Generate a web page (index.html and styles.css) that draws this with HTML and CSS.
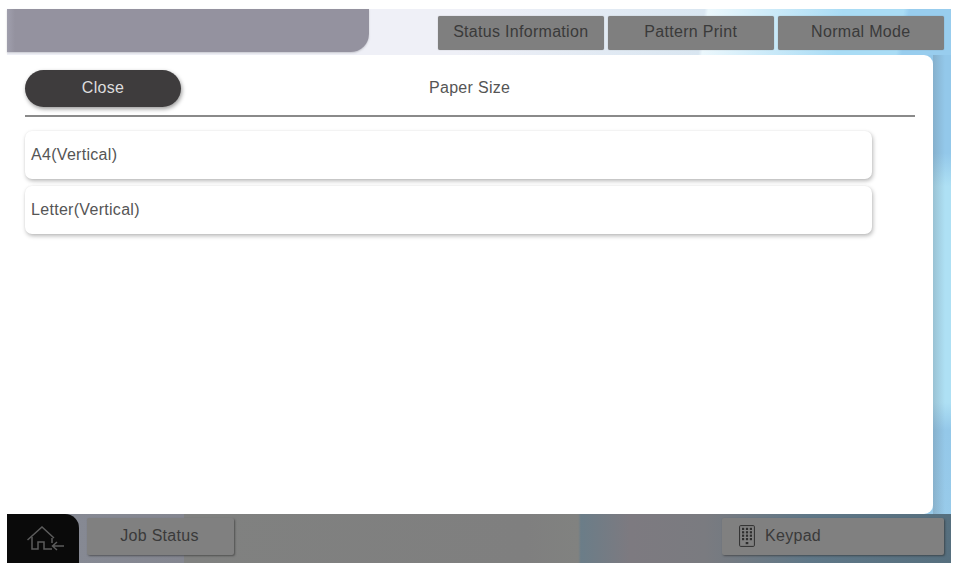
FILE: index.html
```html
<!DOCTYPE html>
<html lang="en">
<head>
<meta charset="utf-8">
<title>Paper Size</title>
<link rel="stylesheet" href="styles.css">
</head>
<body>
<div class="screen">
  <header class="top">
    <div class="tab-shape"></div>
    <nav class="top-buttons">
      <button class="top-btn">Status Information</button>
      <button class="top-btn">Pattern Print</button>
      <button class="top-btn">Normal Mode</button>
    </nav>
  </header>
  <main class="panel">
    <div class="panel-head">
      <button class="close">Close</button>
      <h1 class="title">Paper Size</h1>
    </div>
    <ul class="options">
      <li class="option">A4(Vertical)</li>
      <li class="option">Letter(Vertical)</li>
    </ul>
  </main>
  <footer class="bottom">
    <div class="home">
      <svg class="home-icon" width="38" height="25" viewBox="0 0 38 25" fill="none" stroke="#5c5c5c" stroke-width="1.5">
        <path d="M0.5 14 L15 1 L27 12"/>
        <path d="M5 11 V23 H11 V16 H17 V23 H25 M25 12 V17"/>
        <path d="M37 20 H25.5 M30 16 L25.5 20 L30 24"/>
      </svg>
    </div>
    <button class="foot-btn job">Job Status</button>
    <button class="foot-btn keypad">
      <svg width="16" height="22" viewBox="0 0 16 22">
        <rect x="0.6" y="0.6" width="14.8" height="20.8" rx="1" fill="none" stroke="#2e2e2e" stroke-width="1"/>
        <g class="keys">
          <rect x="3" y="2.8" width="2.2" height="2.2"/><rect x="6.9" y="2.8" width="2.2" height="2.2"/><rect x="10.8" y="2.8" width="2.2" height="2.2"/>
          <rect x="3" y="6.2" width="2.2" height="2.2"/><rect x="6.9" y="6.2" width="2.2" height="2.2"/><rect x="10.8" y="6.2" width="2.2" height="2.2"/>
          <rect x="3" y="9.6" width="2.2" height="2.2"/><rect x="6.9" y="9.6" width="2.2" height="2.2"/><rect x="10.8" y="9.6" width="2.2" height="2.2"/>
          <rect x="3" y="13" width="2.2" height="2.2"/><rect x="6.9" y="13" width="2.2" height="2.2"/><rect x="10.8" y="13" width="2.2" height="2.2"/>
          <rect x="6.7" y="17" width="2.6" height="2.2"/>
        </g>
      </svg>
      <span>Keypad</span>
    </button>
  </footer>
</div>
</body>
</html>
```
FILE: styles.css
```css
* { box-sizing: border-box; }
html, body { margin: 0; padding: 0; background: #fff; }
body { font-family: "Liberation Sans", Arial, sans-serif; font-size: 16px; letter-spacing: .3px; color: #555; height: 566px; overflow: hidden; }
button { font: inherit; letter-spacing: inherit; border: 0; padding: 0; margin: 0; }
.screen {
  width: 944px; height: 554px; margin: 9px 0 0 7px;
  display: flex; flex-direction: column;
  background:
    linear-gradient(90deg, transparent 926px, rgba(95,105,115,.25) 926px, transparent 938px),
    linear-gradient(180deg, #93c8ea 0%, #93c8ea 26%, #aee0f4 32%, #aee0f4 71%, #94c8e9 76%, #9accea 100%);
}
.top {
  height: 46px; display: flex; align-items: flex-start; justify-content: space-between;
  padding-right: 7px;
  background:
    linear-gradient(100deg, transparent 94.2%, #98cdee 94.8%),
    linear-gradient(98deg, #eff0f7 0%, #eff0f7 48%, #d9e6f1 73.4%, #ebf7fc 73.8%, #a9dcf5 88%, #a9dcf5 100%);
}
.tab-shape {
  width: 362px; height: 43px; background: linear-gradient(90deg, #a09fad 0, #94929f 8px);
  border-bottom-right-radius: 18px;
  box-shadow: 0 1px 2px rgba(120,120,130,.35);
}
.top-buttons { display: flex; gap: 3.5px; padding-top: 7px; }
.top-btn {
  width: 166.5px; height: 34px; background: #7f7f7f; color: #3a3a3a;
  border-radius: 2px; box-shadow: 0 0 1px rgba(60,60,60,.5);
  padding-bottom: 2px;
}
.panel {
  width: 926px; height: 459px; background: #fff;
  border-radius: 0 9px 9px 0;
  padding: 15px 18px 0;
}
.panel-head { height: 47px; display: flex; border-bottom: 2px solid #8a8a8a; }
.close {
  width: 156px; height: 37px; border-radius: 19px; background: #3e3c3d; color: #ddd;
  box-shadow: 1px 2px 4px rgba(0,0,0,.4); padding-bottom: 2px;
}
.title { flex: none; margin: 0 0 0 248px; font: inherit; letter-spacing: inherit; line-height: 35px; }
.options { list-style: none; margin: 0; padding: 14px 42px 0 0; display: flex; flex-direction: column; gap: 7px; width: 889px; }
.option {
  height: 48px; line-height: 47px; padding-left: 6px; background: #fff; border-radius: 7px;
  box-shadow: 1px 2px 4px rgba(0,0,0,.28), 0 0 2px rgba(0,0,0,.05);
}
.bottom {
  flex: 1; display: flex; align-items: flex-start; padding-right: 7px;
  background:
    linear-gradient(90deg, #878b95 0%, #848690 18.7%, #808180 18.8%, #7f7f7f 55%, #818280 60.5%, #6b7d88 60.8%, #7d7a80 66%, #7a7b80 74%, #5f7787 85%, #566f7e 100%);
}
.home {
  width: 72px; height: 49px; background: #0a0a0a; border-top-right-radius: 14px;
  display: flex; align-items: flex-start; padding: 12px 0 0 20px;
}
.foot-btn {
  height: 37px; margin-top: 4px; background: #808080; color: #3a3a3a; border-radius: 2px;
  box-shadow: 1px 1px 2px rgba(40,40,40,.55);
}
.job { width: 147px; margin-left: 8px; padding: 0 2px 2px 0; }
.keypad {
  width: 222px; margin-left: auto; display: flex; align-items: center; gap: 10px; padding: 0 0 2px 17px;
}
.keys { fill: #2e2e2e; }
```
